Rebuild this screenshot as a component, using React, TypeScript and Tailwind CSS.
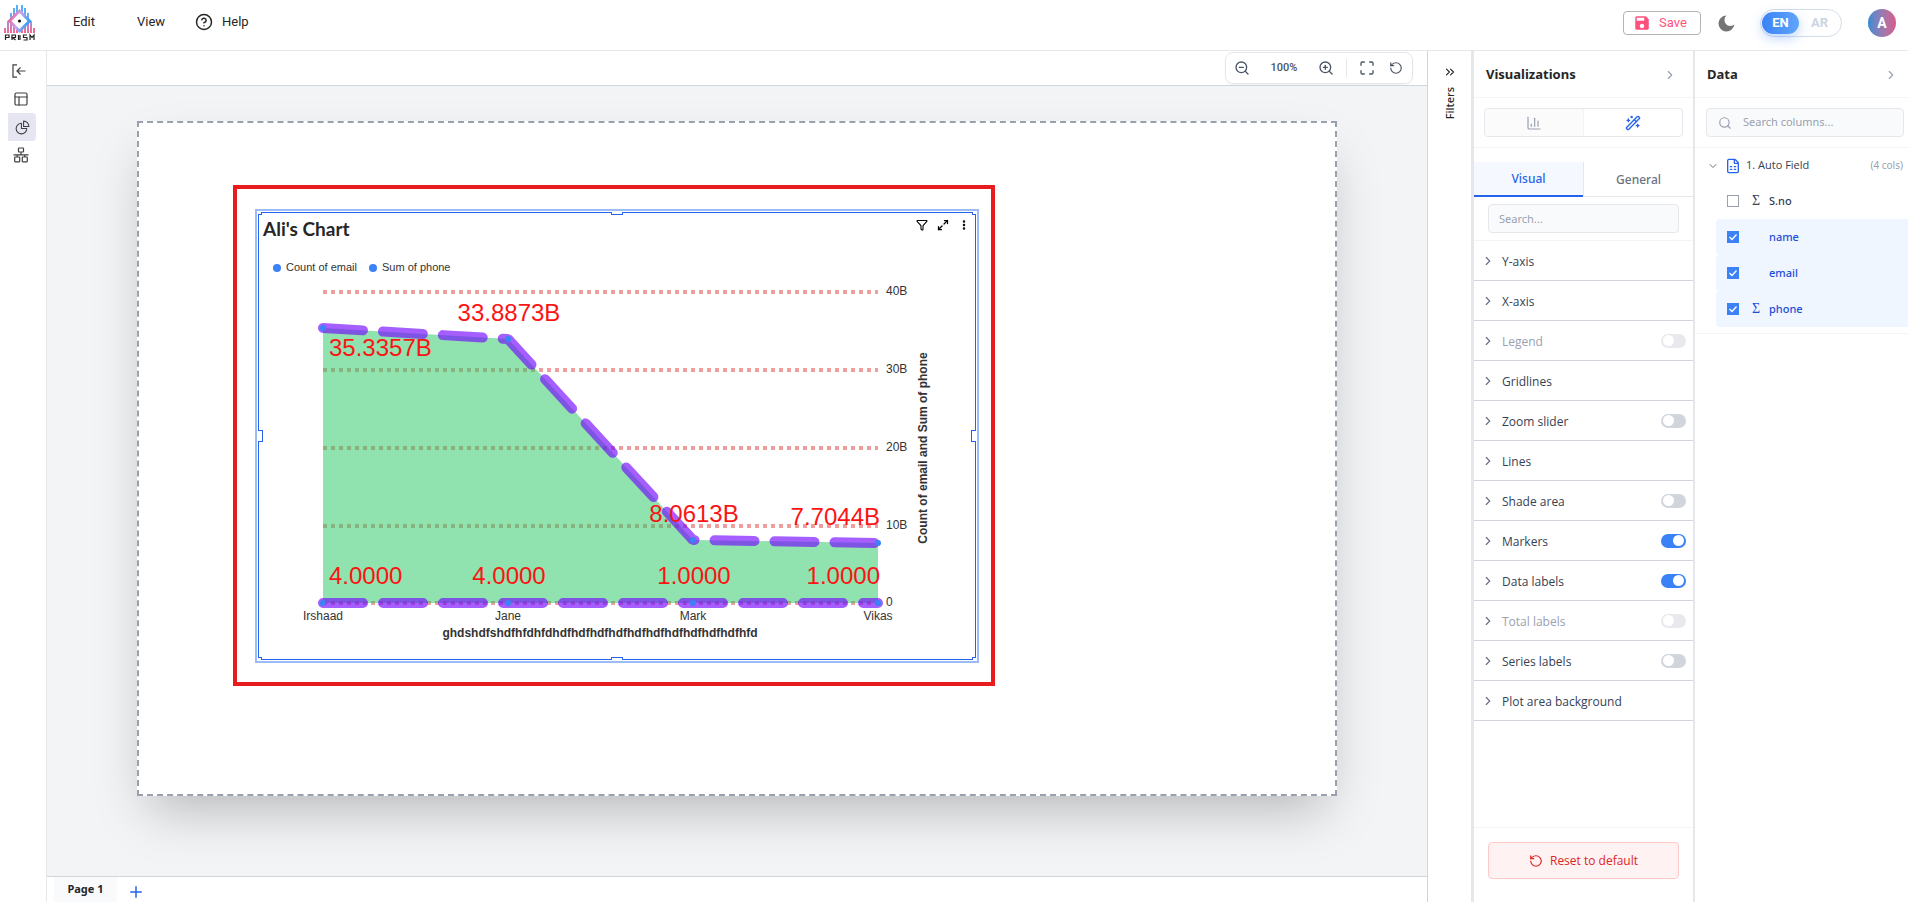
import { useState } from "react";
import {
  ChartColumn,
  ChevronDown,
  ChevronRight,
  ChevronsRight,
  CircleHelp,
  EllipsisVertical,
  FileSpreadsheet,
  Funnel,
  Maximize,
  Maximize2,
  PanelsTopLeft,
  Plus,
  RotateCcw,
  Search,
  WandSparkles,
  ZoomIn,
  ZoomOut,
} from "lucide-react";
import { HiOutlineChartPie } from "react-icons/hi2";
import { MdSave } from "react-icons/md";

type Option = {
  label: string;
  toggle?: boolean;
  on?: boolean;
  disabled?: boolean;
};

const options: Option[] = [
  { label: "Y-axis" },
  { label: "X-axis" },
  { label: "Legend", toggle: true, disabled: true },
  { label: "Gridlines" },
  { label: "Zoom slider", toggle: true },
  { label: "Lines" },
  { label: "Shade area", toggle: true },
  { label: "Markers", toggle: true, on: true },
  { label: "Data labels", toggle: true, on: true },
  { label: "Total labels", toggle: true, disabled: true },
  { label: "Series labels", toggle: true },
  { label: "Plot area background" },
];

const columns = [
  { name: "S.no", numeric: true, checked: false },
  { name: "name", numeric: false, checked: true },
  { name: "email", numeric: false, checked: true },
  { name: "phone", numeric: true, checked: true },
];

const gridLines = [
  { label: "40B", y: 43 },
  { label: "30B", y: 121 },
  { label: "20B", y: 199 },
  { label: "10B", y: 277 },
  { label: "0", y: 354 },
];

const categories = [
  { name: "Irshaad", x: 64, phone: 79, email: 354 },
  { name: "Jane", x: 249, phone: 90, email: 354 },
  { name: "Mark", x: 434, phone: 291, email: 354 },
  { name: "Vikas", x: 619, phone: 294, email: 354 },
];

const dataLabels: { text: string; x: number; y: number; anchor: "start" | "middle" | "end" }[] = [
  { text: "35.3357B", x: 70, y: 107, anchor: "start" },
  { text: "33.8873B", x: 250, y: 72, anchor: "middle" },
  { text: "8.0613B", x: 435, y: 273, anchor: "middle" },
  { text: "7.7044B", x: 621, y: 276, anchor: "end" },
  { text: "4.0000", x: 70, y: 335, anchor: "start" },
  { text: "4.0000", x: 250, y: 335, anchor: "middle" },
  { text: "1.0000", x: 435, y: 335, anchor: "middle" },
  { text: "1.0000", x: 621, y: 335, anchor: "end" },
];

function Logo() {
  return (
    <svg width="32" height="38" viewBox="0 0 32 38" aria-label="Prism">
      <defs>
        <linearGradient id="bars" gradientUnits="userSpaceOnUse" x1="0" y1="0" x2="0" y2="29">
          <stop offset="0" stopColor="#4db4f8" />
          <stop offset="0.4" stopColor="#6fa8f0" />
          <stop offset="0.65" stopColor="#b58ad8" />
          <stop offset="1" stopColor="#f4688f" />
        </linearGradient>
        <linearGradient id="gem" x1="0" y1="0" x2="1" y2="0.4">
          <stop offset="0" stopColor="#f0568a" />
          <stop offset="0.55" stopColor="#c9a8e8" />
          <stop offset="1" stopColor="#3aa2f6" />
        </linearGradient>
      </defs>
      <path
        d="M0 24h2v5H0zM3 17h2v12H3zM6 9h2v20H6zM9 4h2v25H9zM12 1h2v28h-2zM17 1h2v28h-2zM20 4h2v25h-2zM23 9h2v20h-2zM26 17h2v12h-2zM29 24h2v5h-2z"
        fill="url(#bars)"
      />
      <path d="M15.500 7 25.500 17 15.500 27 5.500 17Z" fill="#fff" stroke="url(#gem)" strokeWidth="3" />
      <circle cx="15.500" cy="17" r="1.600" fill="#111" />
      <path
        d="M1.500 36v-5h3.500v2.500H1.500M8 36v-5h3.500v2.500H8.500l3 2.500M14.500 31v5M16 31v5M23 31h-3.500v2.500H23V36h-3.500M26 36v-5l2 2.500 2-2.500v5"
        fill="none"
        stroke="#222"
        strokeWidth="1.200"
      />
    </svg>
  );
}

function Header() {
  return (
    <header className="flex h-[51px] shrink-0 items-center border-b border-gray-200 bg-white pr-3 pl-1 font-['Roboto',sans-serif]">
      <div className="w-[69px] pb-1">
        <Logo />
      </div>
      <nav className="flex items-center pb-1.5 text-[13px] leading-5 text-neutral-800">
        <button type="button" className="w-16 text-left">
          Edit
        </button>
        <button type="button" className="w-[58px] text-left">
          View
        </button>
        <button type="button" className="flex items-center gap-[9px]">
          <CircleHelp size={18} strokeWidth={2} />
          Help
        </button>
      </nav>

      <div className="ml-auto flex items-center pb-1">
        <button
          type="button"
          className="flex h-6 w-[78px] items-center justify-center gap-2 rounded border border-neutral-400/80 pr-1 text-[13px] text-[#ff4f7b]"
        >
          <MdSave size={18} />
          Save
        </button>
        <button type="button" aria-label="Dark mode" className="ml-[17px]">
          <svg width="17" height="17" viewBox="0 0 17 17" fill="#757575">
            <path d="M8.500.500A8 8 0 1 0 16.400 9.600 5.600 5.600 0 0 1 8.500.500Z" />
          </svg>
        </button>
        <div className="ml-[25px] flex h-7 w-[82px] items-center rounded-full border border-slate-300/80 px-px text-[13px] font-bold">
          <button
            type="button"
            className="h-[22px] w-[37px] rounded-full bg-linear-to-r from-[#3b82f6] to-[#60a5fa] text-white shadow-[0_4px_12px_rgba(59,130,246,0.35)]"
          >
            EN
          </button>
          <button type="button" className="flex-1 text-slate-300">
            AR
          </button>
        </div>
        <button
          type="button"
          className="ml-[26px] size-7 rounded-full bg-linear-to-r from-[#2a8ad4] to-[#d85a8a] text-sm font-bold text-white"
        >
          A
        </button>
      </div>
    </header>
  );
}

function Sidebar() {
  return (
    <aside className="flex w-[47px] shrink-0 flex-col border-r border-gray-200 bg-white pt-1.5 pl-2 text-neutral-700">
      <button type="button" aria-label="Collapse" className="flex h-7 w-[22px] items-center justify-center">
        <svg width="14" height="14" viewBox="0 0 14 14" fill="none" stroke="currentColor" strokeWidth="1.200">
          <path d="M5 .8H1v12.400h4M13.500 7H5M8.500 3.500 5 7l3.500 3.500" />
        </svg>
      </button>
      <button type="button" aria-label="Table" className="flex h-7 w-[26px] items-center justify-center">
        <PanelsTopLeft size={16} strokeWidth={1.800} />
      </button>
      <button
        type="button"
        aria-label="Charts"
        className="flex size-7 items-center justify-center rounded-r bg-[#e6e6f3]"
      >
        <HiOutlineChartPie size={17} />
      </button>
      <button type="button" aria-label="Model" className="flex h-7 w-[26px] items-center justify-center">
        <svg width="16" height="16" viewBox="0 0 16 16" fill="none" stroke="currentColor" strokeWidth="1.200">
          <rect x="5.500" y="1" width="5" height="4" rx="0.500" />
          <path d="M8 5v3M.500 7.800h15M4.200 8v2M11.800 8v2" />
          <rect x="1.700" y="10" width="5" height="4.800" rx="0.500" />
          <rect x="9.300" y="10" width="5" height="4.800" rx="0.500" />
        </svg>
      </button>
    </aside>
  );
}

function ChartPlot() {
  return (
    <svg viewBox="0 0 716 410" className="block w-full font-['Liberation_Sans',Arial,sans-serif]" fill="#333">
      <circle cx="18" cy="19" r="4" fill="#3b82f6" />
      <text x="27" y="22" fontSize="11">
        Count of email
      </text>
      <circle cx="114" cy="19" r="4" fill="#3b82f6" />
      <text x="123" y="22" fontSize="11">
        Sum of phone
      </text>

      {gridLines.map((line) => (
        <g key={line.label}>
          <path d={`M64 ${line.y}H619`} stroke="#dc2626" strokeOpacity="0.45" strokeWidth="4" strokeDasharray="4 4" />
          <text x="627" y={line.y + 3} fontSize="12">
            {line.label}
          </text>
        </g>
      ))}

      <path d="M64 79 249 90 434 291 619 294V354H64Z" fill="#22c55e" fillOpacity="0.5" />
      <g fill="none" stroke="#7508ff" strokeOpacity="0.65" strokeWidth="10" strokeDasharray="40 20" strokeLinecap="round">
        <path d="M64 354H619" strokeLinejoin="bevel" />
        <path d="M64 79 249 90 434 291 619 294" strokeLinejoin="bevel" />
      </g>

      {categories.map((item) => (
        <g key={item.name}>
          <circle cx={item.x} cy={item.phone} r="3" fill="#3b82f6" />
          <circle cx={item.x} cy={item.email} r="3" fill="#3b82f6" />
          <text x={item.x} y="371" fontSize="12" textAnchor="middle">
            {item.name}
          </text>
        </g>
      ))}

      {dataLabels.map((label) => (
        <text key={`${label.text}-${label.x}`} x={label.x} y={label.y} fontSize="24" fill="#fb1414" textAnchor={label.anchor}>
          {label.text}
        </text>
      ))}

      <text x="341" y="388" fontSize="12" fontWeight="700" textAnchor="middle">
        ghdshdfshdfhfdhfdhdfhdfhdfhdfhdfhdfhdfhdfhdfhdfhfd
      </text>
      <text transform="translate(668 199) rotate(-90)" fontSize="12" fontWeight="700" textAnchor="middle">
        Count of email and Sum of phone
      </text>
    </svg>
  );
}

function ResizeHandles() {
  return (
    <>
      <span className="absolute -top-px -left-px h-[3px] w-1 border-r border-b border-[#2563eb] bg-white" />
      <span className="absolute -top-px -right-px h-[3px] w-1 border-b border-l border-[#2563eb] bg-white" />
      <span className="absolute -bottom-px -left-px h-[3px] w-1 border-t border-r border-[#2563eb] bg-white" />
      <span className="absolute -right-px -bottom-px h-[3px] w-1 border-t border-l border-[#2563eb] bg-white" />
      <span className="absolute -top-px left-1/2 h-[3px] w-3 -translate-x-1/2 border-x border-b border-[#2563eb] bg-white" />
      <span className="absolute -bottom-px left-1/2 h-[3px] w-3 -translate-x-1/2 border-x border-t border-[#2563eb] bg-white" />
      <span className="absolute top-1/2 -left-px h-3 w-[5px] -translate-y-1/2 border-y border-r border-[#2563eb] bg-white" />
      <span className="absolute top-1/2 -right-px h-3 w-[5px] -translate-y-1/2 border-y border-l border-[#2563eb] bg-white" />
    </>
  );
}

function Canvas() {
  return (
    <section className="flex min-h-0 flex-1 justify-center overflow-hidden bg-gray-100 pt-[35px]">
      <div className="relative h-[675px] w-[1200px] shrink-0 border-2 border-dashed border-gray-400 bg-white shadow-2xl">
        <div className="absolute top-[62px] left-[94px] h-[501px] w-[762px] border-4 border-[#e81c1c]" />
        <article className="absolute top-[86px] left-[116px] h-[454px] w-[724px] border-2 border-[#9bbcf9] p-px">
          <div className="relative h-full border border-[#2563eb]">
            <div className="flex h-9 items-center justify-between pr-[5px] pl-1">
              <h2 className="pb-1 font-['Lato',sans-serif] text-[19px] leading-6 font-bold text-neutral-800">
                Ali's Chart
              </h2>
              <div className="flex items-center gap-[9px] pb-3 text-black">
                <button type="button" aria-label="Filter">
                  <Funnel size={12} strokeWidth={2.200} />
                </button>
                <button type="button" aria-label="Expand">
                  <Maximize2 size={12} strokeWidth={2.500} />
                </button>
                <button type="button" aria-label="More options">
                  <EllipsisVertical size={12} strokeWidth={3} />
                </button>
              </div>
            </div>
            <ChartPlot />
            <ResizeHandles />
          </div>
        </article>
      </div>
    </section>
  );
}

function Workspace() {
  return (
    <main className="flex min-w-0 flex-1 flex-col">
      <div className="flex h-[35px] shrink-0 items-end justify-end border-b border-gray-300 bg-white pr-3.5 pb-px">
        <div className="flex h-8 w-[188px] items-center rounded-lg border border-gray-200 px-2 text-gray-600 shadow-xs">
          <button type="button" aria-label="Zoom out">
            <ZoomOut size={16} />
          </button>
          <span className="w-[68px] text-center font-['Roboto',sans-serif] text-[11px] font-medium">100%</span>
          <button type="button" aria-label="Zoom in">
            <ZoomIn size={16} />
          </button>
          <span className="ml-3 h-[18px] w-px bg-gray-200" />
          <button type="button" aria-label="Fit to screen" className="ml-3">
            <Maximize size={16} />
          </button>
          <button type="button" aria-label="Reset zoom" className="ml-3.5">
            <RotateCcw size={14} />
          </button>
        </div>
      </div>
      <Canvas />
      <footer className="flex h-[26px] shrink-0 items-center border-t border-gray-300 bg-white pl-[7px]">
        <button type="button" className="h-full w-[63px] bg-gray-50 text-[11px] font-bold text-neutral-800">
          Page 1
        </button>
        <button type="button" aria-label="Add page" className="ml-2.5 pt-1 text-[#2563eb]">
          <Plus size={18} strokeWidth={2} />
        </button>
      </footer>
    </main>
  );
}

function OptionRow({ option }: { option: Option }) {
  const [on, setOn] = useState(Boolean(option.on));

  return (
    <li className="flex h-10 items-center border-b border-gray-300 pr-[7px] pl-[7px]">
      <ChevronRight size={14} className="text-gray-500" />
      <span
        className={`ml-[7px] pt-[3px] font-['Open_Sans','Noto_Sans',sans-serif] text-xs font-medium ${
          option.disabled ? "text-gray-400" : "text-gray-700"
        }`}
      >
        {option.label}
      </span>
      {option.toggle && (
        <label className={`ml-auto ${option.disabled ? "opacity-50" : ""}`}>
          <input
            type="checkbox"
            className="peer sr-only"
            aria-label={option.label}
            checked={on}
            disabled={option.disabled}
            onChange={() => setOn(!on)}
          />
          <span className="block h-3.5 w-[25px] rounded-full bg-gray-300 px-0.5 py-px peer-checked:bg-[#3b82f6] peer-checked:*:translate-x-2.5">
            <span className="block size-[11px] rounded-full bg-white" />
          </span>
        </label>
      )}
    </li>
  );
}

function VisualizationsPanel() {
  return (
    <aside className="flex w-[221px] shrink-0 flex-col border-r-2 border-gray-200 bg-white">
      <div className="flex h-[47px] shrink-0 items-center justify-between border-b border-gray-100 pt-px pr-4 pl-3">
        <h2 className="text-[13px] font-bold text-neutral-800">Visualizations</h2>
        <button type="button" aria-label="Collapse visualizations" className="text-gray-400">
          <ChevronRight size={14} />
        </button>
      </div>
      <div className="shrink-0 border-b border-gray-100 px-2.5 py-2.5">
        <div className="flex h-[29px] overflow-hidden rounded-sm border border-gray-200">
          <button
            type="button"
            aria-label="Build visual"
            className="flex flex-1 items-center justify-center border-r border-gray-100 bg-gray-50/70 text-gray-400"
          >
            <ChartColumn size={16} strokeWidth={1.800} />
          </button>
          <button
            type="button"
            aria-label="Format visual"
            className="flex flex-1 items-center justify-center text-[#2563eb]"
          >
            <WandSparkles size={16} />
          </button>
        </div>
      </div>
      <div className="mt-3.5 flex h-[35px] shrink-0 text-xs font-medium">
        <button type="button" className="flex-1 border-b-2 border-[#2563eb] bg-[#f5f9ff] text-[#2563eb]">
          Visual
        </button>
        <button type="button" className="flex-1 border-b border-l border-gray-200 pt-0.5 text-gray-500">
          General
        </button>
      </div>
      <div className="shrink-0 border-b border-gray-100 px-3.5 py-[7px]">
        <input
          type="search"
          aria-label="Search options"
          placeholder="Search..."
          className="block h-[29px] w-full rounded-sm border border-gray-200 bg-gray-50 px-2.5 text-[11px] placeholder:text-gray-400"
        />
      </div>
      <ul className="min-h-0 flex-1 overflow-hidden">
        {options.map((option) => (
          <OptionRow key={option.label} option={option} />
        ))}
      </ul>
      <div className="shrink-0 border-t border-gray-100 px-3.5 pt-3.5 pb-[23px]">
        <button
          type="button"
          className="flex h-[37px] w-full items-center justify-center gap-[7px] rounded border border-red-200 bg-red-50 font-['Open_Sans','Noto_Sans',sans-serif] text-xs font-medium text-[#dc2626]"
        >
          <RotateCcw size={14} />
          Reset to default
        </button>
      </div>
    </aside>
  );
}

function DataPanel() {
  return (
    <aside className="flex w-[213px] shrink-0 flex-col bg-white">
      <div className="flex h-[47px] shrink-0 items-center justify-between border-b border-gray-100 pt-px pr-2.5 pl-3">
        <h2 className="text-[13px] font-bold text-neutral-800">Data</h2>
        <button type="button" aria-label="Collapse data" className="text-gray-400">
          <ChevronRight size={14} />
        </button>
      </div>
      <div className="border-b border-gray-100 py-2.5 pr-1 pl-[11px]">
        <label className="flex h-[29px] items-center gap-[11px] rounded-sm border border-gray-200 bg-gray-50 px-[11px] text-gray-400">
          <Search size={14} className="shrink-0" />
          <input
            type="search"
            aria-label="Search columns"
            placeholder="Search columns..."
            className="w-full min-w-0 text-[11px] placeholder:text-gray-400"
          />
        </label>
      </div>
      <div className="border-b border-gray-100 pb-1.5">
        <div className="flex h-[35px] items-center pr-[5px] pl-3">
          <ChevronDown size={12} className="text-gray-500" />
          <FileSpreadsheet size={16} className="ml-1.5 text-[#2563eb]" />
          <span className="ml-[5px] font-['Open_Sans','Noto_Sans',sans-serif] text-[11px] font-medium text-gray-700">
            1. Auto Field
          </span>
          <span className="ml-auto text-[10px] text-gray-400">(4 cols)</span>
        </div>
        {columns.map((column) => (
          <label
            key={column.name}
            className={`ml-[21px] flex h-9 items-center rounded-l pl-[11px] text-[11px] font-medium ${
              column.checked ? "bg-[#eff6ff] text-[#1d4ed8]" : "text-gray-700"
            }`}
          >
            <input type="checkbox" defaultChecked={column.checked} className="peer sr-only" />
            <span className="flex size-3 items-center justify-center border border-gray-400 bg-white text-white peer-checked:border-[#3b82f6] peer-checked:bg-[#3b82f6]">
              <svg width="10" height="10" viewBox="0 0 10 10" fill="none" stroke="currentColor" strokeWidth="1.300">
                <path d="m1.500 5 2.500 2.500 4.500-5" />
              </svg>
            </span>
            <span className="ml-[13px] w-[17px] font-['Liberation_Serif',serif] text-sm">
              {column.numeric ? "Σ" : ""}
            </span>
            {column.name}
          </label>
        ))}
      </div>
    </aside>
  );
}

function App() {
  return (
    <div className="flex h-screen flex-col overflow-hidden bg-white font-['Noto_Sans','Open_Sans',sans-serif]">
      <Header />
      <div className="flex min-h-0 flex-1">
        <Sidebar />
        <Workspace />
        <aside className="flex w-[47px] shrink-0 flex-col items-center gap-2 border-r-[3px] border-l border-r-gray-200 border-l-gray-300 bg-white pt-3.5 text-neutral-800">
          <button type="button" aria-label="Expand filters">
            <ChevronsRight size={14} />
          </button>
          <h2 className="rotate-180 text-[11px] leading-4 font-medium [writing-mode:vertical-rl]">Filters</h2>
        </aside>
        <VisualizationsPanel />
        <DataPanel />
      </div>
    </div>
  );
}

export default App;
